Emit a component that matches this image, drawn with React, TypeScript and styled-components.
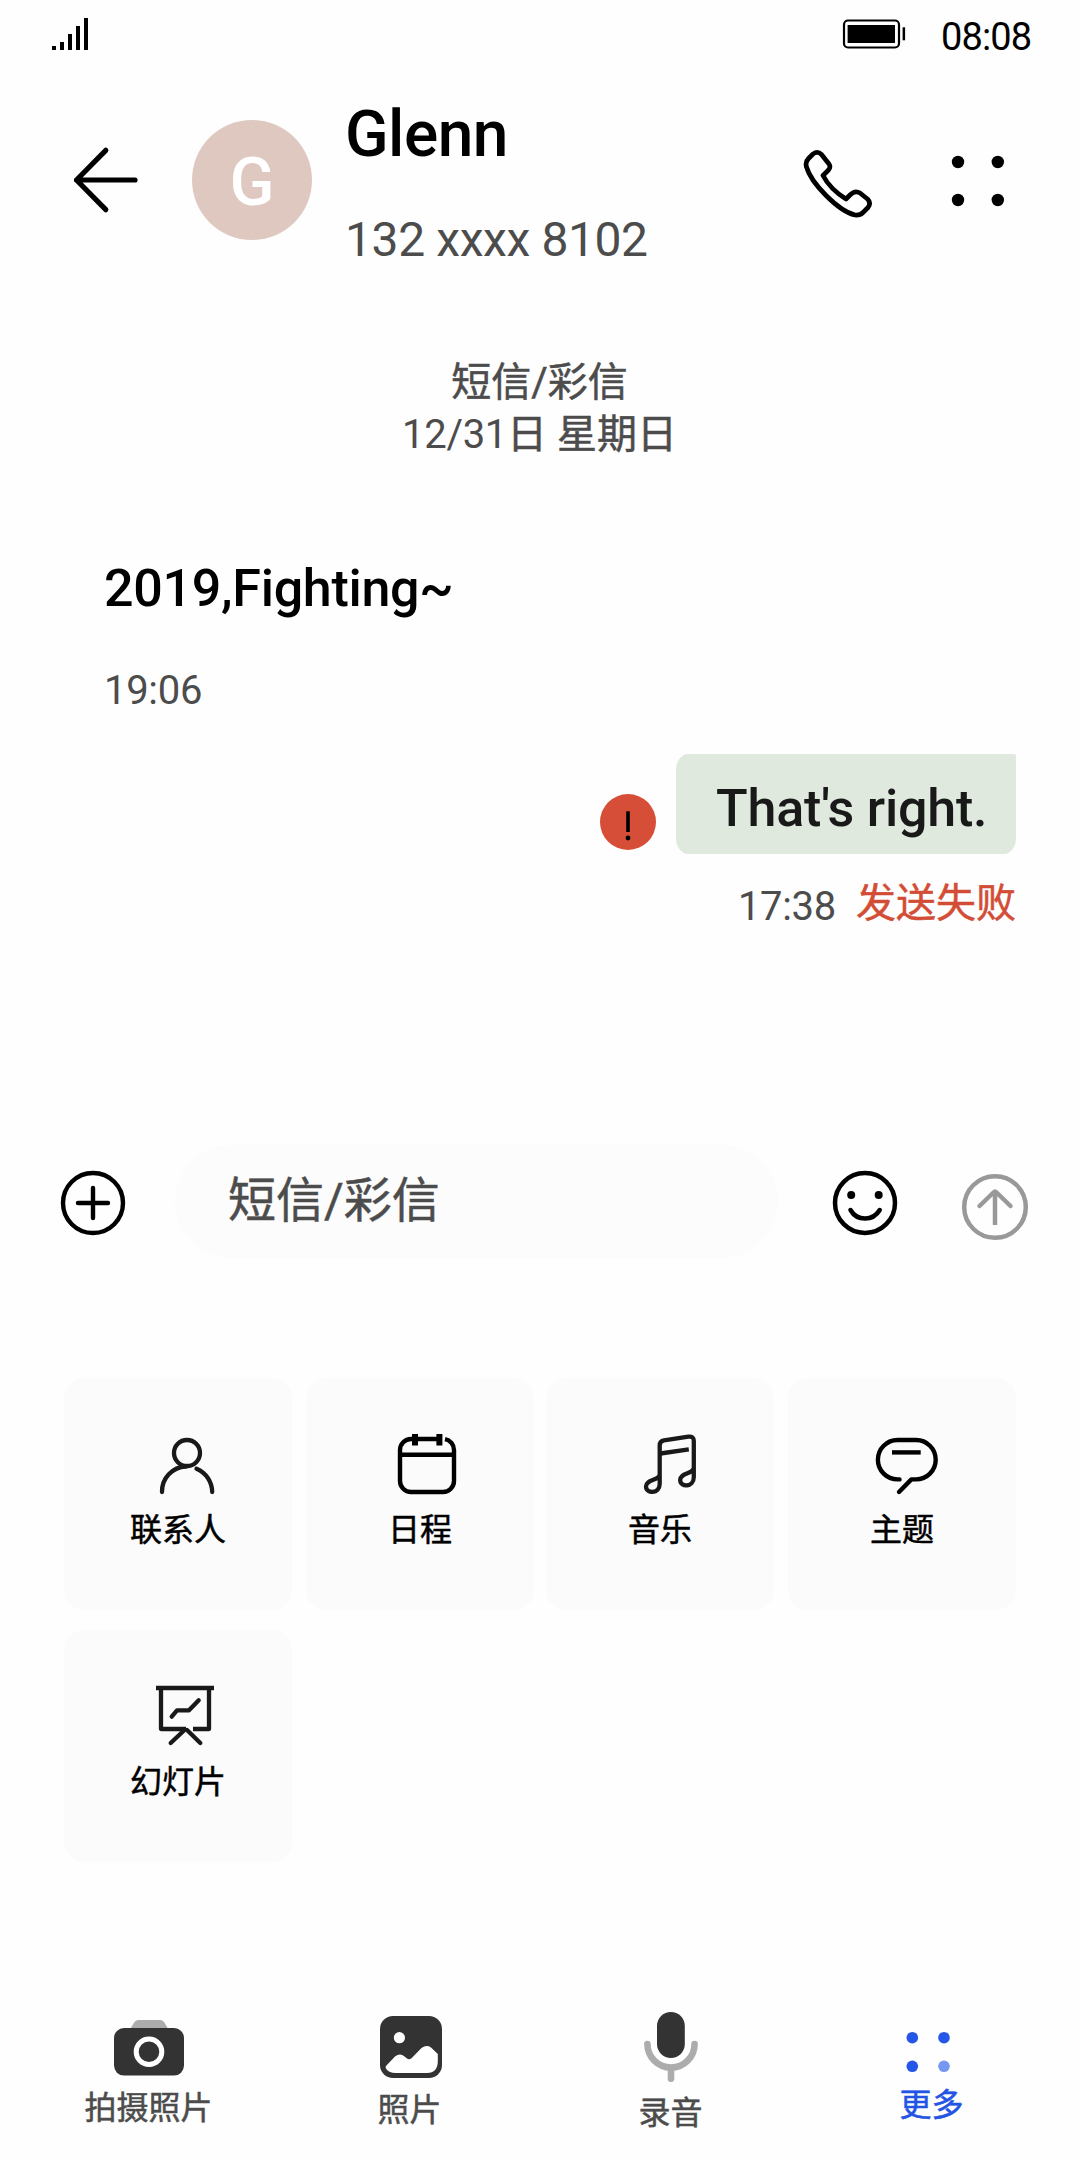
import React from "react";
import styled, { createGlobalStyle } from "styled-components";

const GlobalStyle = createGlobalStyle`
  * { box-sizing: border-box; }
  body {
    margin: 0;
    background: #fefefe;
    font-family: Roboto, "Noto Sans CJK SC", sans-serif;
  }
`;

const Screen = styled.div`
  width: 1080px;
  height: 2160px;
  display: flex;
  flex-direction: column;
  background: #fefefe;
  color: #000;
  overflow: hidden;
  white-space: nowrap;
`;

const Icon = styled.svg`
  display: block;
  flex: none;
  fill: none;
  stroke-linecap: round;
  stroke-linejoin: round;
`;

/* Chinese text, drawn slightly heavier than the regular weight */
const Han = styled.span`
  -webkit-text-stroke: 0.5px currentColor;
  letter-spacing: 0;
`;

/* Status bar */
const StatusBar = styled.div`
  height: 72px;
  padding: 0 49px 0 52px;
  display: flex;
  align-items: flex-start;
`;

const Signal = styled.div`
  height: 50px;
  display: flex;
  align-items: flex-end;
  gap: 4px;
`;

const SignalBar = styled.i<{ $level: number }>`
  width: 4px;
  height: ${(p) => p.$level}px;
  background: #000;
`;

const StatusRight = styled.div`
  margin-left: auto;
  padding-top: 13px;
  display: flex;
  align-items: flex-start;
  gap: 35px;
`;

const Battery = styled.div`
  padding-top: 5px;
`;

const Clock = styled.span`
  width: 90px;
  font-size: 38px;
  line-height: 48px;
  letter-spacing: -0.9px;
`;

/* Conversation header */
const Header = styled.header`
  height: 228px;
  padding: 0 72px 0 72px;
  display: flex;
  align-items: flex-start;
`;

const BackButton = styled.div`
  margin: 72px 52px 0 0;
`;

const Avatar = styled.div`
  width: 120px;
  height: 120px;
  margin: 48px 33px 0 0;
  border-radius: 50%;
  display: flex;
  align-items: center;
  justify-content: center;
  background: #dec8c0;
  color: #fff;
  font-size: 66px;
  font-weight: 500;
  line-height: 120px;
  padding-top: 5px;
`;

const Contact = styled.div`
  flex: 1;
  padding-top: 27px;
`;

const ContactName = styled.div`
  font-size: 64px;
  font-weight: 500;
  line-height: 72px;
  letter-spacing: -0.5px;
`;

const ContactNumber = styled.div`
  margin-top: 41px;
  font-size: 48px;
  line-height: 56px;
  letter-spacing: -0.4px;
  color: #4c4c4c;
`;

const HeaderActions = styled.div`
  display: flex;
  gap: 76px;
  padding-top: 72px;
`;

/* Messages */
const Messages = styled.main`
  height: 800px;
  padding: 57px 64px 0 104px;
  display: flex;
  flex-direction: column;
`;

const DateHeading = styled.div`
  margin-left: -104px;
  margin-right: -63px;
  text-align: center;
  font-size: 40px;
  line-height: 52px;
  letter-spacing: -0.3px;
  color: #4c4c4c;
`;

const Received = styled.div`
  margin-top: 98px;
  font-size: 52px;
  font-weight: 500;
  line-height: 60px;
  letter-spacing: -0.3px;
`;

const Time = styled.div`
  font-size: 40px;
  line-height: 48px;
  letter-spacing: -0.3px;
  color: #4c4c4c;
`;

const ReceivedTime = styled(Time)`
  margin-top: 48px;
`;

const SentRow = styled.div`
  margin-top: 39px;
  display: flex;
  justify-content: flex-end;
  align-items: flex-end;
  gap: 20px;
`;

const Warning = styled.div`
  margin-bottom: 4px;
`;

const Bubble = styled.div`
  width: 340px;
  height: 100px;
  padding: 25px 0 0 40px;
  border-radius: 12px 2px 12px 12px / 16px 2px 16px 16px;
  background: #dfe9de;
  color: #191919;
  font-size: 52px;
  font-weight: 500;
  line-height: 60px;
  letter-spacing: -0.2px;
`;

const SentMeta = styled.div`
  margin-top: 26px;
  display: flex;
  justify-content: flex-end;
  gap: 20px;
`;

const SentTime = styled(Time)`
  padding-top: 3px;
`;

const Failed = styled.div`
  font-size: 40px;
  line-height: 48px;
  color: #d34c35;
`;

/* Composer */
const Composer = styled.div`
  height: 278px;
  padding: 45px 49px 0 57px;
  display: flex;
  align-items: flex-start;
`;

const AddButton = styled.div`
  margin: 22px 46px 0 0;
`;

const Field = styled.div`
  width: 603px;
  height: 113px;
  padding: 0 53px;
  border-radius: 57px;
  background: #fcfcfc;
  font-size: 48px;
  line-height: 112px;
  color: #4c4c4c;
`;

const ComposerActions = styled.div`
  margin: 22px 0 0 auto;
  display: flex;
  gap: 58px;
`;

/* Attachment grid */
const Tools = styled.div`
  height: 604px;
  padding: 0 64px;
  display: grid;
  grid-template-columns: 242px 240px 242px 228px;
  grid-auto-rows: 232px;
  align-content: start;
  row-gap: 20px;
`;

const ToolCard = styled.div`
  width: 228px;
  padding: 54px 0 0;
  border-radius: 20px;
  background: #fbfbfb;
  display: flex;
  flex-direction: column;
  align-items: center;
`;

const ToolIcon = styled.div`
  padding-left: 16px;
`;

const ToolLabel = styled.div`
  margin-top: 14px;
  font-size: 32px;
  line-height: 40px;
`;

/* Bottom tabs */
const Tabs = styled.nav`
  padding: 26px 18px 0;
  display: grid;
  grid-template-columns: repeat(4, 261px);
`;

const Tab = styled.div<{ $active?: boolean }>`
  display: flex;
  flex-direction: column;
  align-items: center;
  color: ${(p) => (p.$active ? "#2454e4" : "#4c4c4c")};
`;

const TabLabel = styled.div<{ $top: number }>`
  margin-top: ${(p) => p.$top}px;
  font-size: 32px;
  line-height: 40px;
`;

const tools = [
  {
    label: "联系人",
    icon: (
      <Icon width="64" height="64" viewBox="154 1432 64 64" stroke="#191919" strokeWidth="4.3">
        <circle cx="187" cy="1453" r="13" />
        <path d="M162 1492a25 25 0 0 1 24-25.5M196.500 1468.700a25.500 25.500 0 0 1 15.700 23.300" />
      </Icon>
    ),
  },
  {
    label: "日程",
    icon: (
      <Icon width="64" height="64" viewBox="396 1432 64 64" stroke="#000" strokeWidth="4.4">
        <path
          strokeLinecap="butt"
          d="M442 1439H411a11 11 0 0 0-11 11V1481a11 11 0 0 0 11 11H443a11 11 0 0 0 11-11V1450a11 11 0 0 0-9-10.900M400 1454.700H454"
        />
        <path fill="#000" stroke="none" d="M412 1434h6v11.400h-6zM436.400 1434h6v11.400h-6z" />
      </Icon>
    ),
  },
  {
    label: "音乐",
    icon: (
      <Icon width="64" height="64" viewBox="636 1432 64 64" stroke="#191919" strokeWidth="4.3">
        <path d="M659.700 1475C657.500 1481 646 1479.500 646 1486.500C646 1494 659.700 1494 659.700 1484V1445.500Q659.700 1441 664 1440.400L688.400 1436.600Q693.800 1436 693.800 1441V1477C693.800 1488 680.200 1487.500 680.200 1480C680.200 1473 691.500 1474.500 693.600 1468.500" />
        <path strokeLinecap="butt" d="M660.500 1453.500L688.800 1449.300" />
      </Icon>
    ),
  },
  {
    label: "主题",
    icon: (
      <Icon width="64" height="64" viewBox="878 1432 64 64" overflow="visible" stroke="#000" strokeWidth="4.4">
        <path d="M899.500 1479.400H897.600A19.700 19.700 0 0 1 897.600 1440H916A19.700 19.700 0 0 1 916 1479.400H911.400L899 1492" />
        <path strokeLinecap="butt" d="M892 1452.400H920.700" />
      </Icon>
    ),
  },
  {
    label: "幻灯片",
    icon: (
      <Icon width="64" height="64" viewBox="154 1684 64 64" stroke="#191919" strokeWidth="4.3">
        <path strokeLinecap="butt" d="M156 1688H214M161 1688V1729H186M193 1729H209V1688" />
        <path d="M171.700 1716.700L177 1710.300H189L198.700 1700.300M184.500 1730L170.700 1743M187 1730L200.300 1743" />
      </Icon>
    ),
  },
];

const tabs = [
  {
    label: "拍摄照片",
    top: 8,
    icon: (
      <Icon width="72" height="72" viewBox="113 2008 72 72">
        <path fill="#acacac" d="M130.500 2028.500L134.500 2022Q136 2020 138.500 2020H160Q162.500 2020 164 2022L168 2028.500Z" />
        <rect x="114" y="2028" width="70" height="47.6" rx="10" fill="#333" />
        <circle cx="149" cy="2051.7" r="12.8" stroke="#fff" strokeWidth="5" />
      </Icon>
    ),
  },
  {
    label: "照片",
    top: 10,
    icon: (
      <Icon width="72" height="72" viewBox="374 2008 72 72">
        <rect x="380" y="2016" width="62" height="62" rx="13" fill="#333" />
        <circle cx="399.4" cy="2037.7" r="5.6" fill="#fff" />
        <path
          fill="#fff"
          d="M386 2066L395 2056.500Q400 2052.500 404.500 2056.500L407 2058.600Q409 2060 411.500 2058.300L421.500 2048Q426.500 2044.300 431 2047.500L437.800 2054V2061Q437.800 2073 427 2073H396Q388 2073 385.700 2068Q385.500 2067 386 2066Z"
        />
      </Icon>
    ),
  },
  {
    label: "录音",
    top: 9,
    icon: (
      <Icon width="72" height="76" viewBox="635 2008 72 76">
        <rect x="657" y="2012" width="27.8" height="46" rx="13.9" fill="#333" />
        <path stroke="#acacac" strokeWidth="6.6" d="M647.400 2044a23.600 23.600 0 0 0 47.200 0M671 2068V2078.700" />
      </Icon>
    ),
  },
  {
    label: "更多",
    top: 5,
    active: true,
    icon: (
      <Icon width="72" height="72" viewBox="896 2008 72 72">
        <g fill="#2456e8">
          <circle cx="912.3" cy="2037.7" r="5.8" />
          <circle cx="944" cy="2037.7" r="5.8" />
          <circle cx="912.3" cy="2066.3" r="5.8" />
        </g>
        <circle cx="944" cy="2066.3" r="5.8" fill="#7698f0" />
      </Icon>
    ),
  },
];

export default function App() {
  return (
    <>
      <GlobalStyle />
      <Screen>
        <StatusBar>
          <Signal>
            {[4, 8, 16, 24, 32].map((level) => (
              <SignalBar key={level} $level={level} />
            ))}
          </Signal>
          <StatusRight>
            <Battery>
              <Icon width="64" height="32" viewBox="842 18 64 32">
                <rect x="844" y="20.5" width="55" height="27" rx="4" stroke="#000" strokeWidth="2.2" />
                <rect x="847.6" y="25" width="47.4" height="18" fill="#000" />
                <rect x="902.6" y="27.3" width="2.5" height="13" fill="#000" />
              </Icon>
            </Battery>
            <Clock>08:08</Clock>
          </StatusRight>
        </StatusBar>

        <Header>
          <BackButton>
            <Icon width="68" height="72" viewBox="72.5 144 68 72" stroke="#000" strokeWidth="5.2">
              <path d="M106.300 150.300L77 180L106.300 209.700M77 180H135.500" />
            </Icon>
          </BackButton>
          <Avatar>G</Avatar>
          <Contact>
            <ContactName>Glenn</ContactName>
            <ContactNumber>132 xxxx 8102</ContactNumber>
          </Contact>
          <HeaderActions>
            <Icon width="72" height="78" viewBox="802 144 72 78" stroke="#000" strokeWidth="4.7">
              <path d="M808.500 158.500L813 154Q817.500 150.500 821.500 154.500L829 164Q831 167 828.500 170L823 175.500Q830 189 846 199L850 195Q855 190 860 193L867.500 199Q871.500 203 868 207.500L863 212.500Q860 215.500 855 215C838 211 811 183 806.500 167Q805 162 808.500 158.500Z" />
            </Icon>
            <Icon width="58" height="72" viewBox="950 144 58 72">
              <g fill="#000">
                <circle cx="958" cy="162" r="6.2" />
                <circle cx="997.8" cy="162" r="6.2" />
                <circle cx="958" cy="200" r="6.2" />
                <circle cx="997.8" cy="200" r="6.2" />
              </g>
            </Icon>
          </HeaderActions>
        </Header>

        <Messages>
          <DateHeading>
            <Han>短信/彩信</Han>
            <br />
            12/31<Han>日 星期日</Han>
          </DateHeading>
          <Received>2019,Fighting~</Received>
          <ReceivedTime>19:06</ReceivedTime>
          <SentRow>
            <Warning>
              <Icon width="56" height="56" viewBox="600 794 56 56">
                <circle cx="628" cy="822" r="28" fill="#d64e37" />
                <path fill="#000" d="M626.200 811.300h3.600v20.700h-3.600z" />
                <circle cx="628" cy="838" r="2.4" fill="#000" />
              </Icon>
            </Warning>
            <Bubble>That's right.</Bubble>
          </SentRow>
          <SentMeta>
            <SentTime>17:38</SentTime>
            <Failed>
              <Han>发送失败</Han>
            </Failed>
          </SentMeta>
        </Messages>

        <Composer>
          <AddButton>
            <Icon width="72" height="72" viewBox="57 1167 72 72" stroke="#000" strokeWidth="4.4">
              <circle cx="93" cy="1203" r="30" />
              <path d="M78 1203H108M93 1188V1218" />
            </Icon>
          </AddButton>
          <Field>
            <Han>短信/彩信</Han>
          </Field>
          <ComposerActions>
            <Icon width="72" height="72" viewBox="829 1167 72 72" stroke="#000" strokeWidth="4.5">
              <circle cx="865" cy="1203" r="30" />
              <path d="M850.500 1210Q855.500 1218.600 865 1218.600Q874.500 1218.600 879.700 1210" />
              <circle cx="851.2" cy="1195" r="4" fill="#000" stroke="none" />
              <circle cx="878.7" cy="1195" r="4" fill="#000" stroke="none" />
            </Icon>
            <Icon width="72" height="76" viewBox="959 1167 72 76" stroke="#999" strokeWidth="4.5">
              <circle cx="995" cy="1207" r="30.8" />
              <path d="M979.500 1206L993.500 1192.500Q995 1191 996.500 1192.500L1010.500 1206" />
              <path strokeLinecap="butt" d="M995 1192V1225" />
            </Icon>
          </ComposerActions>
        </Composer>

        <Tools>
          {tools.map((tool) => (
            <ToolCard key={tool.label}>
              <ToolIcon>{tool.icon}</ToolIcon>
              <ToolLabel>
                <Han>{tool.label}</Han>
              </ToolLabel>
            </ToolCard>
          ))}
        </Tools>

        <Tabs>
          {tabs.map((tab) => (
            <Tab key={tab.label} $active={tab.active}>
              {tab.icon}
              <TabLabel $top={tab.top}>
                <Han>{tab.label}</Han>
              </TabLabel>
            </Tab>
          ))}
        </Tabs>
      </Screen>
    </>
  );
}
